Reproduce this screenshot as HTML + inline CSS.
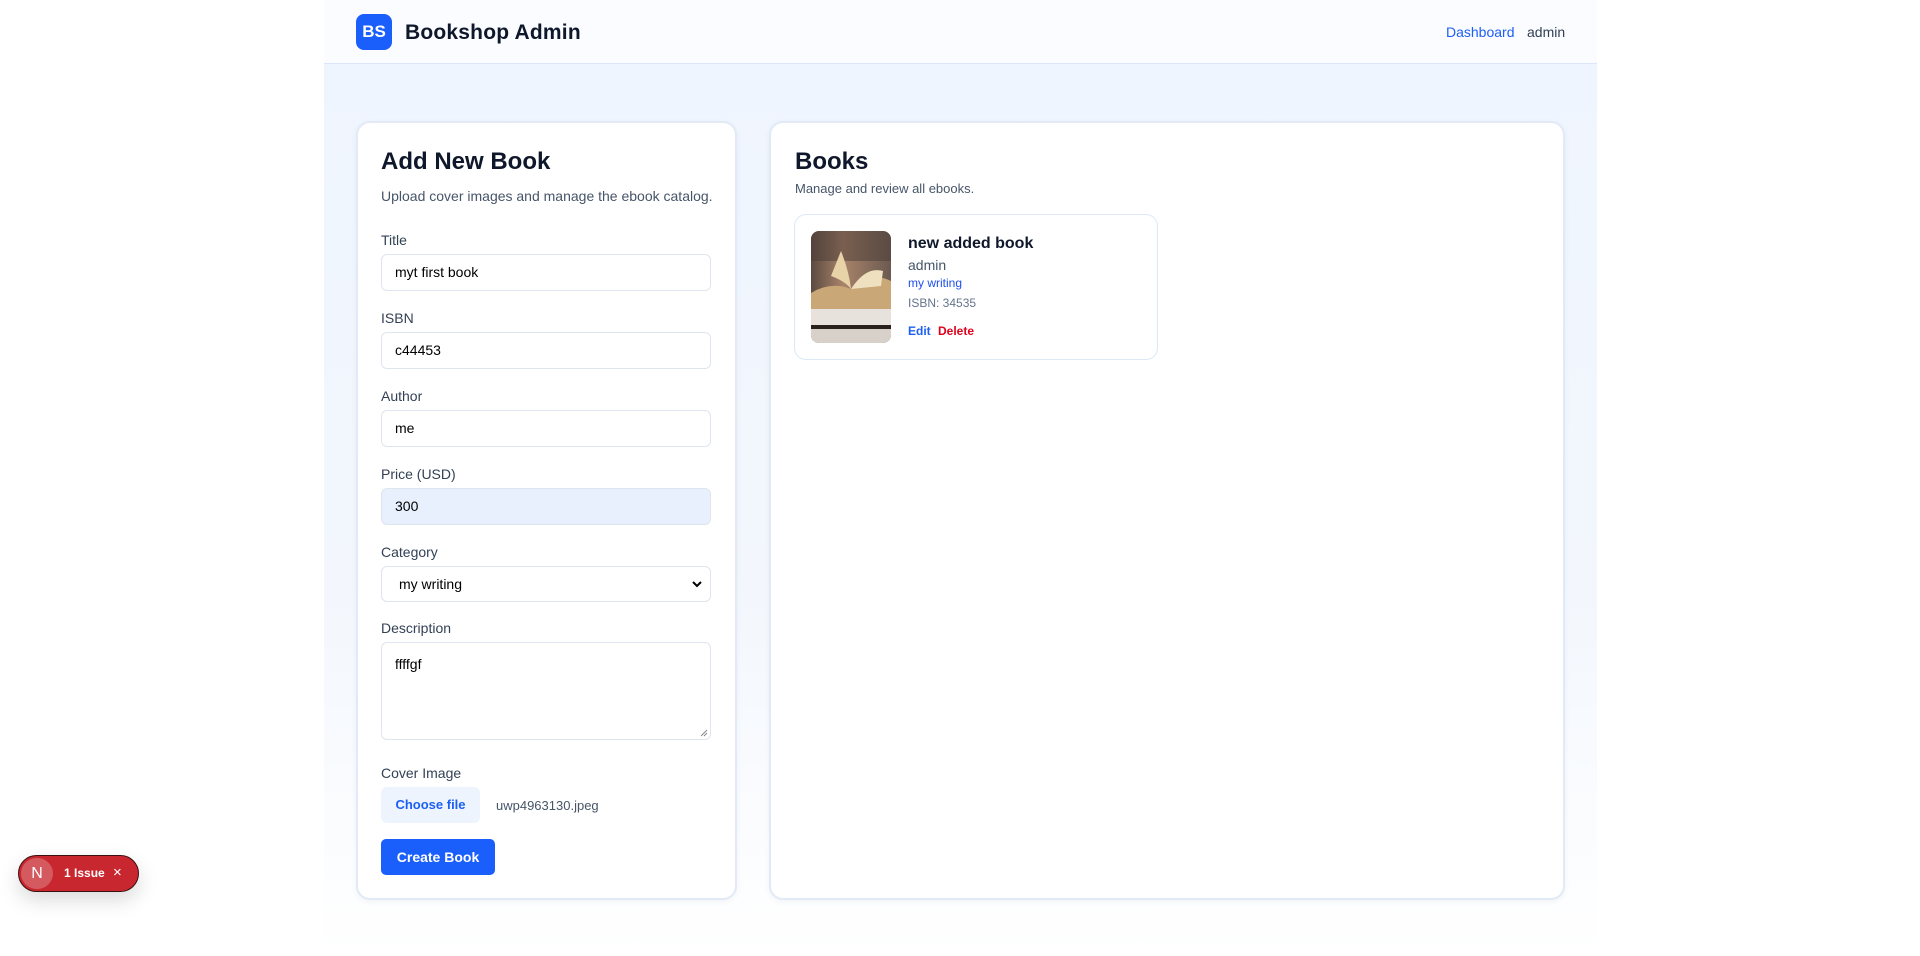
<!DOCTYPE html>
<html><head><meta charset="utf-8"><style>
*{box-sizing:border-box;margin:0;padding:0}
body{width:1920px;height:956px;background:#fff;font-family:"Liberation Sans",Arial,sans-serif;position:relative;overflow:hidden;color:#0f172a}
.a{position:absolute}
.main{left:324px;top:64px;width:1273px;height:892px;background:linear-gradient(#eff5fe 0%,#f3f7fd 60%,#fff 100%)}
.hdr{left:324px;top:0;width:1273px;height:64px;background:#fafcff;border-bottom:1px solid #dbe7f8}
.card{background:#fff;border:2px solid #e1eaf6;border-radius:14px;box-shadow:0 2px 6px rgba(30,60,120,.05)}
.lbl{font-size:14px;color:#334155}
.inp{left:381px;width:330px;height:37px;border:1px solid #dfe5ee;border-radius:6px;background:#fff;font-size:14px;padding:0 13px;line-height:35px;color:#000}
</style></head><body>
<div class="a main"></div>
<div class="a hdr"></div>
<div class="a" style="left:356px;top:14px;width:36px;height:36px;background:#1a5efc;border-radius:8px;color:#fff;font-weight:bold;font-size:17px;text-align:center;line-height:36px">BS</div>
<div class="a" style="left:405px;top:21px;font-size:21px;font-weight:bold;color:#0f172a;letter-spacing:.2px">Bookshop Admin</div>
<div class="a" style="left:1446px;top:24px;font-size:14px;color:#1d5ff5">Dashboard</div>
<div class="a" style="left:1527px;top:24px;font-size:14px;color:#334155">admin</div>

<div class="a card" style="left:356px;top:121px;width:381px;height:779px"></div>
<div class="a" style="left:381px;top:148px;font-size:24px;font-weight:bold">Add New Book</div>
<div class="a" style="left:381px;top:188px;font-size:14px;color:#475569">Upload cover images and manage the ebook catalog.</div>

<div class="a lbl" style="left:381px;top:232px">Title</div>
<div class="a inp" style="top:254px">myt first book</div>
<div class="a lbl" style="left:381px;top:310px">ISBN</div>
<div class="a inp" style="top:332px">c44453</div>
<div class="a lbl" style="left:381px;top:388px">Author</div>
<div class="a inp" style="top:410px">me</div>
<div class="a lbl" style="left:381px;top:466px">Price (USD)</div>
<div class="a inp" style="top:488px;background:#e8f0fe">300</div>
<div class="a lbl" style="left:381px;top:544px">Category</div>
<div class="a inp" style="top:566px;height:36px;padding-left:17px;line-height:34px">my writing
<svg class="a" style="right:8px;top:13px" width="10" height="8" viewBox="0 0 10 8"><path d="M1 2l4 4 4-4" stroke="#000" stroke-width="2" fill="none"/></svg></div>
<div class="a lbl" style="left:381px;top:620px">Description</div>
<div class="a inp" style="top:642px;height:98px;line-height:18px;padding-top:12px">ffffgf
<svg class="a" style="right:2px;bottom:2px" width="8" height="8"><path d="M1 7L7 1M4 7L7 4" stroke="#888" stroke-width="1"/></svg></div>
<div class="a lbl" style="left:381px;top:765px">Cover Image</div>
<div class="a" style="left:381px;top:787px;width:99px;height:36px;background:#eef4fe;border-radius:6px;color:#1d5ff5;font-weight:bold;font-size:13px;text-align:center;line-height:36px">Choose file</div>
<div class="a" style="left:496px;top:798px;font-size:13px;color:#475569">uwp4963130.jpeg</div>
<div class="a" style="left:381px;top:839px;width:114px;height:36px;background:#1a5efc;border-radius:5px;color:#fff;font-weight:bold;font-size:14px;text-align:center;line-height:36px">Create Book</div>

<div class="a card" style="left:769px;top:121px;width:796px;height:779px"></div>
<div class="a" style="left:795px;top:148px;font-size:24px;font-weight:bold">Books</div>
<div class="a" style="left:795px;top:181px;font-size:13px;color:#475569">Manage and review all ebooks.</div>
<div class="a" style="left:794px;top:214px;width:364px;height:146px;border:1.5px solid #dde8f7;border-radius:12px;background:#fff"></div>
<svg class="a" style="left:811px;top:231px;border-radius:8px" width="80" height="112" viewBox="0 0 80 112">
<defs><linearGradient id="g" x1="0" x2="1"><stop offset="0" stop-color="#5b4a40"/><stop offset=".4" stop-color="#a8836a"/><stop offset="1" stop-color="#6b5a50"/></linearGradient></defs>
<rect width="80" height="112" fill="url(#g)"/>
<rect y="0" width="80" height="30" fill="#4a3c35" opacity=".5"/>
<path d="M0 62 Q20 50 40 58 Q60 40 80 50 L80 80 L0 80Z" fill="#c9a777"/>
<path d="M30 20 Q38 40 40 58 Q34 50 20 45Z" fill="#e8d2a8"/>
<path d="M40 58 Q55 35 72 40 L70 55 Z" fill="#efe0c0"/>
<rect y="78" width="80" height="16" fill="#e7e2dc"/>
<rect y="94" width="80" height="4" fill="#2a211c"/>
<rect y="98" width="80" height="14" fill="#d8d1c9"/>
</svg>
<div class="a" style="left:908px;top:235px;font-size:16px;font-weight:bold;color:#0f172a">new added book</div>
<div class="a" style="left:908px;top:257px;font-size:14px;color:#475569">admin</div>
<div class="a" style="left:908px;top:276px;font-size:12px;color:#1d4ff0">my writing</div>
<div class="a" style="left:908px;top:296px;font-size:12px;color:#64748b">ISBN: 34535</div>
<div class="a" style="left:908px;top:324px;font-size:12px;font-weight:bold;color:#1d5ff5">Edit</div>
<div class="a" style="left:938px;top:324px;font-size:12px;font-weight:bold;color:#e0001b">Delete</div>

<div class="a" style="left:18px;top:855px;width:121px;height:37px;background:#c9272f;border:1px solid #3a1010;border-radius:19px;box-shadow:0 8px 20px rgba(0,0,0,.15)">
<div class="a" style="left:2px;top:2px;width:32px;height:31px;border-radius:50%;background:#d55a60;color:#fff;font-size:16px;text-align:center;line-height:31px">N</div>
<div class="a" style="left:45px;top:10px;color:#fff;font-size:12px;font-weight:bold;white-space:nowrap">1 Issue</div>
<div class="a" style="left:94px;top:8px;color:#fff;font-size:15px">×</div>
</div>
</body></html>
